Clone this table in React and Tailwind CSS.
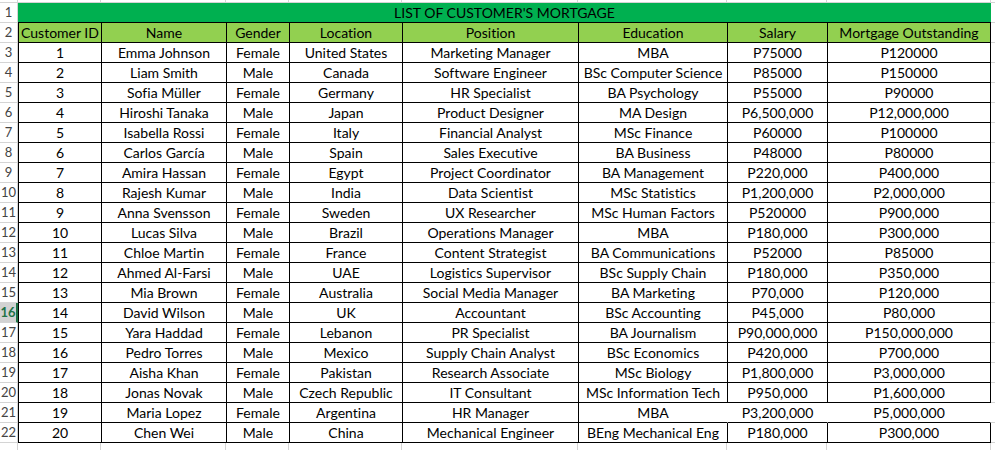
import React from 'react'

const columns = [
    { key: 'id', label: 'Customer ID', w: 'w-[83px]' },
    { key: 'name', label: 'Name', w: 'w-[125px]' },
    { key: 'gender', label: 'Gender', w: 'w-[63px]' },
    { key: 'location', label: 'Location', w: 'w-[113px]' },
    { key: 'position', label: 'Position', w: 'w-[176px]' },
    { key: 'education', label: 'Education', w: 'w-[149px]' },
    { key: 'salary', label: 'Salary', w: 'w-[100px]' },
    { key: 'mortgage', label: 'Mortgage Outstanding', w: 'w-[164px] border-r' },
]

const customers = [
    [1, 'Emma Johnson', 'Female', 'United States', 'Marketing Manager', 'MBA', 'P75000', 'P120000'],
    [2, 'Liam Smith', 'Male', 'Canada', 'Software Engineer', 'BSc Computer Science', 'P85000', 'P150000'],
    [3, 'Sofia Müller', 'Female', 'Germany', 'HR Specialist', 'BA Psychology', 'P55000', 'P90000'],
    [4, 'Hiroshi Tanaka', 'Male', 'Japan', 'Product Designer', 'MA Design', 'P6,500,000', 'P12,000,000'],
    [5, 'Isabella Rossi', 'Female', 'Italy', 'Financial Analyst', 'MSc Finance', 'P60000', 'P100000'],
    [6, 'Carlos García', 'Male', 'Spain', 'Sales Executive', 'BA Business', 'P48000', 'P80000'],
    [7, 'Amira Hassan', 'Female', 'Egypt', 'Project Coordinator', 'BA Management', 'P220,000', 'P400,000'],
    [8, 'Rajesh Kumar', 'Male', 'India', 'Data Scientist', 'MSc Statistics', 'P1,200,000', 'P2,000,000'],
    [9, 'Anna Svensson', 'Female', 'Sweden', 'UX Researcher', 'MSc Human Factors', 'P520000', 'P900,000'],
    [10, 'Lucas Silva', 'Male', 'Brazil', 'Operations Manager', 'MBA', 'P180,000', 'P300,000'],
    [11, 'Chloe Martin', 'Female', 'France', 'Content Strategist', 'BA Communications', 'P52000', 'P85000'],
    [12, 'Ahmed Al-Farsi', 'Male', 'UAE', 'Logistics Supervisor', 'BSc Supply Chain', 'P180,000', 'P350,000'],
    [13, 'Mia Brown', 'Female', 'Australia', 'Social Media Manager', 'BA Marketing', 'P70,000', 'P120,000'],
    [14, 'David Wilson', 'Male', 'UK', 'Accountant', 'BSc Accounting', 'P45,000', 'P80,000'],
    [15, 'Yara Haddad', 'Female', 'Lebanon', 'PR Specialist', 'BA Journalism', 'P90,000,000', 'P150,000,000'],
    [16, 'Pedro Torres', 'Male', 'Mexico', 'Supply Chain Analyst', 'BSc Economics', 'P420,000', 'P700,000'],
    [17, 'Aisha Khan', 'Female', 'Pakistan', 'Research Associate', 'MSc Biology', 'P1,800,000', 'P3,000,000'],
    [18, 'Jonas Novak', 'Male', 'Czech Republic', 'IT Consultant', 'MSc Information Tech', 'P950,000', 'P1,600,000'],
    [19, 'Maria Lopez', 'Female', 'Argentina', 'HR Manager', 'MBA', 'P3,200,000', 'P5,000,000'],
    [20, 'Chen Wei', 'Male', 'China', 'Mechanical Engineer', 'BEng Mechanical Eng', 'P180,000', 'P300,000'],
]

// row number cell on the left edge
const RowNum = ({ n, active }) => (
    <div
        className={`w-[18px] shrink-0 h-full flex items-center justify-center text-[13px] border-b border-[#d4d4d4] ${
            active
                ? 'bg-[#d2d2d2] text-[#217346] font-bold border-r-2 border-r-[#217346]'
                : 'text-[#444] border-r border-r-[#d4d4d4]'
        }`}
    >
        {n}
    </div>
)

const Filler = () => <div className="flex-1 h-full border-b border-[#d4d4d4]" />

export default function App() {
    return (
        <div className="w-[995px] h-[450px] overflow-hidden bg-white text-black font-['Lato',sans-serif] text-[14px] leading-none [font-variant-ligatures:none]">
            {/* partial row above */}
            <div className="flex h-[3px]">
                <div className="w-[18px] border-r border-b border-[#d4d4d4]" />
                <div className="w-[83px] border-r border-b border-[#d4d4d4]" />
                <div className="w-[125px] border-r border-b border-[#d4d4d4]" />
                <div className="w-[63px] border-r border-b border-[#d4d4d4]" />
                <div className="w-[113px] border-r border-b border-[#d4d4d4]" />
                <div className="w-[176px] border-r border-b border-[#d4d4d4]" />
                <div className="w-[149px] border-r border-b border-[#d4d4d4]" />
                <div className="w-[100px] border-r border-b border-[#d4d4d4]" />
                <div className="w-[164px] border-r border-b border-[#d4d4d4]" />
                <div className="flex-1 border-b border-[#d4d4d4]" />
            </div>

            {/* title */}
            <div className="flex h-[20px]">
                <RowNum n={1} />
                <div className="w-[973px] shrink-0 h-full bg-[#00b050] border-b border-black flex items-center justify-center">
                    LIST OF CUSTOMER'S MORTGAGE
                </div>
                <Filler />
            </div>

            {/* header */}
            <div className="flex h-[20px]">
                <RowNum n={2} />
                {columns.map((c) => (
                    <div
                        key={c.key}
                        className={`${c.w} shrink-0 h-full bg-[#92d050] border-l border-b border-black flex items-center justify-center whitespace-nowrap`}
                    >
                        {c.label}
                    </div>
                ))}
                <Filler />
            </div>

            {customers.map((row, i) => {
                const gap = row[0] === 19
                return (
                    <div key={row[0]} className="flex h-[20px]">
                        <RowNum n={i + 3} active={i + 3 === 16} />
                        {columns.map((c, j) => {
                            let border = 'border-l border-black'
                            if (gap && (c.key === 'salary' || c.key === 'mortgage')) border = 'border-l border-l-transparent'
                            const right = c.key === 'mortgage' ? (gap ? 'border-r-transparent' : '') : ''
                            return (
                                <div
                                    key={c.key}
                                    className={`${c.w} ${border} ${right} shrink-0 h-full border-b border-b-black flex items-center justify-center whitespace-nowrap`}
                                >
                                    {row[j]}
                                </div>
                            )
                        })}
                        <Filler />
                    </div>
                )
            })}

            {/* partial row below */}
            <div className="flex h-[8px]">
                <div className="w-[18px] border-r border-[#d4d4d4]" />
                <div className="w-[83px] border-r border-[#d4d4d4]" />
                <div className="w-[125px] border-r border-[#d4d4d4]" />
                <div className="w-[63px] border-r border-[#d4d4d4]" />
                <div className="w-[113px] border-r border-[#d4d4d4]" />
                <div className="w-[176px] border-r border-[#d4d4d4]" />
                <div className="w-[149px] border-r border-[#d4d4d4]" />
                <div className="w-[100px] border-r border-[#d4d4d4]" />
                <div className="w-[164px] border-r border-[#d4d4d4]" />
                <div className="flex-1" />
            </div>
        </div>
    )
}
